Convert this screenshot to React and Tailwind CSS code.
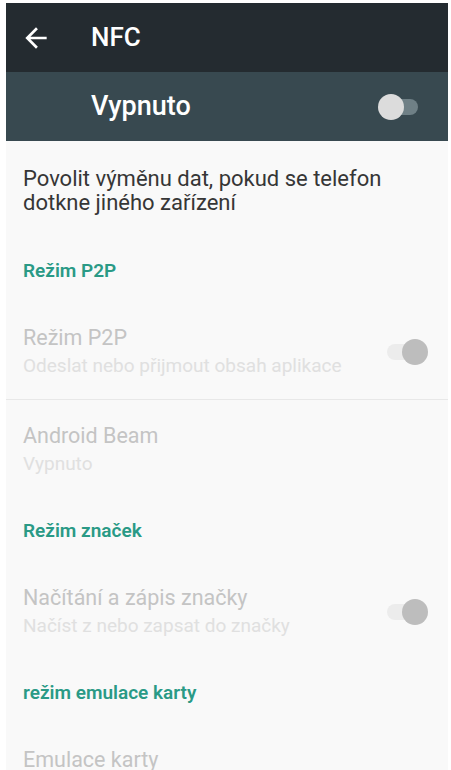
import React from "react";

// NFC settings screen (Android, disabled state)
const sections = [
  {
    header: "Režim P2P",
    items: [
      { title: "Režim P2P", summary: "Odeslat nebo přijmout obsah aplikace", toggle: true, divider: true },
      { title: "Android Beam", summary: "Vypnuto" },
    ],
  },
  {
    header: "Režim značek",
    items: [{ title: "Načítání a zápis značky", summary: "Načíst z nebo zapsat do značky", toggle: true }],
  },
  {
    header: "režim emulace karty",
    items: [{ title: "Emulace karty" }],
  },
];

function DisabledSwitch() {
  return (
    <div className="relative w-[41px] h-[26px] shrink-0">
      <div className="absolute left-0 top-[5px] w-[34px] h-[16px] rounded-full bg-[#ececec]" />
      <div className="absolute right-0 top-0 w-[26px] h-[26px] rounded-full bg-[#bdbdbd]" />
    </div>
  );
}

function MasterSwitch() {
  return (
    <div className="relative w-[40px] h-[26px] shrink-0">
      <div className="absolute right-0 top-[5px] w-[36px] h-[16px] rounded-full bg-[#6f8086]" />
      <div className="absolute left-0 top-0 w-[26px] h-[26px] rounded-full bg-[#dcdcdc]" />
    </div>
  );
}

export default function App() {
  return (
    <div
      className="w-[451px] h-[770px] overflow-hidden bg-white pt-[3px] pl-[6px] pr-[3px]"
      style={{ fontFamily: "Roboto, 'Noto Sans', sans-serif" }}
    >
      <div className="h-full bg-[#f9f9f9]">
        {/* toolbar */}
        <div className="h-[69px] bg-[#242b30] flex items-center pl-[14px]">
          <svg width="32" height="32" viewBox="0 0 24 24" fill="#ffffff">
            <path d="M20 11H7.83l5.59-5.59L12 4l-8 8 8 8 1.41-1.41L7.83 13H20v-2z" />
          </svg>
          <span className="ml-[39px] text-[26px] font-medium text-white">NFC</span>
        </div>

        {/* master switch bar */}
        <div className="h-[69px] bg-[#384950] flex items-center justify-between pl-[85px] pr-[30px]">
          <span className="text-[27px] font-medium text-white">Vypnuto</span>
          <MasterSwitch />
        </div>

        <div className="pl-[17px]">
          <p className="pt-[26px] pr-[20px] text-[22px] leading-[24px] text-[#363636]">
            Povolit výměnu dat, pokud se telefon dotkne jiného zařízení
          </p>

          {sections.map((section) => (
            <div key={section.header}>
              <div className="mt-[45px] text-[19px] leading-[22px] font-semibold text-[#2a9a86]">
                {section.header}
              </div>
              {section.items.map((item, i) => (
                <div
                  key={item.title}
                  className={
                    (i === 0 ? "mt-[44px] " : "mt-[24px] ") +
                    (item.divider ? "border-b border-[#e8e8e8] pb-[22px] -ml-[17px] pl-[17px] " : "") +
                    "flex items-center justify-between pr-[20px]"
                  }
                >
                  <div>
                    <div className="text-[21.5px] leading-[24px] text-[#c4c4c4]">{item.title}</div>
                    {item.summary && (
                      <div className="mt-[5px] text-[19px] leading-[22px] text-[#e0e0e0]">{item.summary}</div>
                    )}
                  </div>
                  {item.toggle && <DisabledSwitch />}
                </div>
              ))}
            </div>
          ))}
        </div>
      </div>
    </div>
  );
}
